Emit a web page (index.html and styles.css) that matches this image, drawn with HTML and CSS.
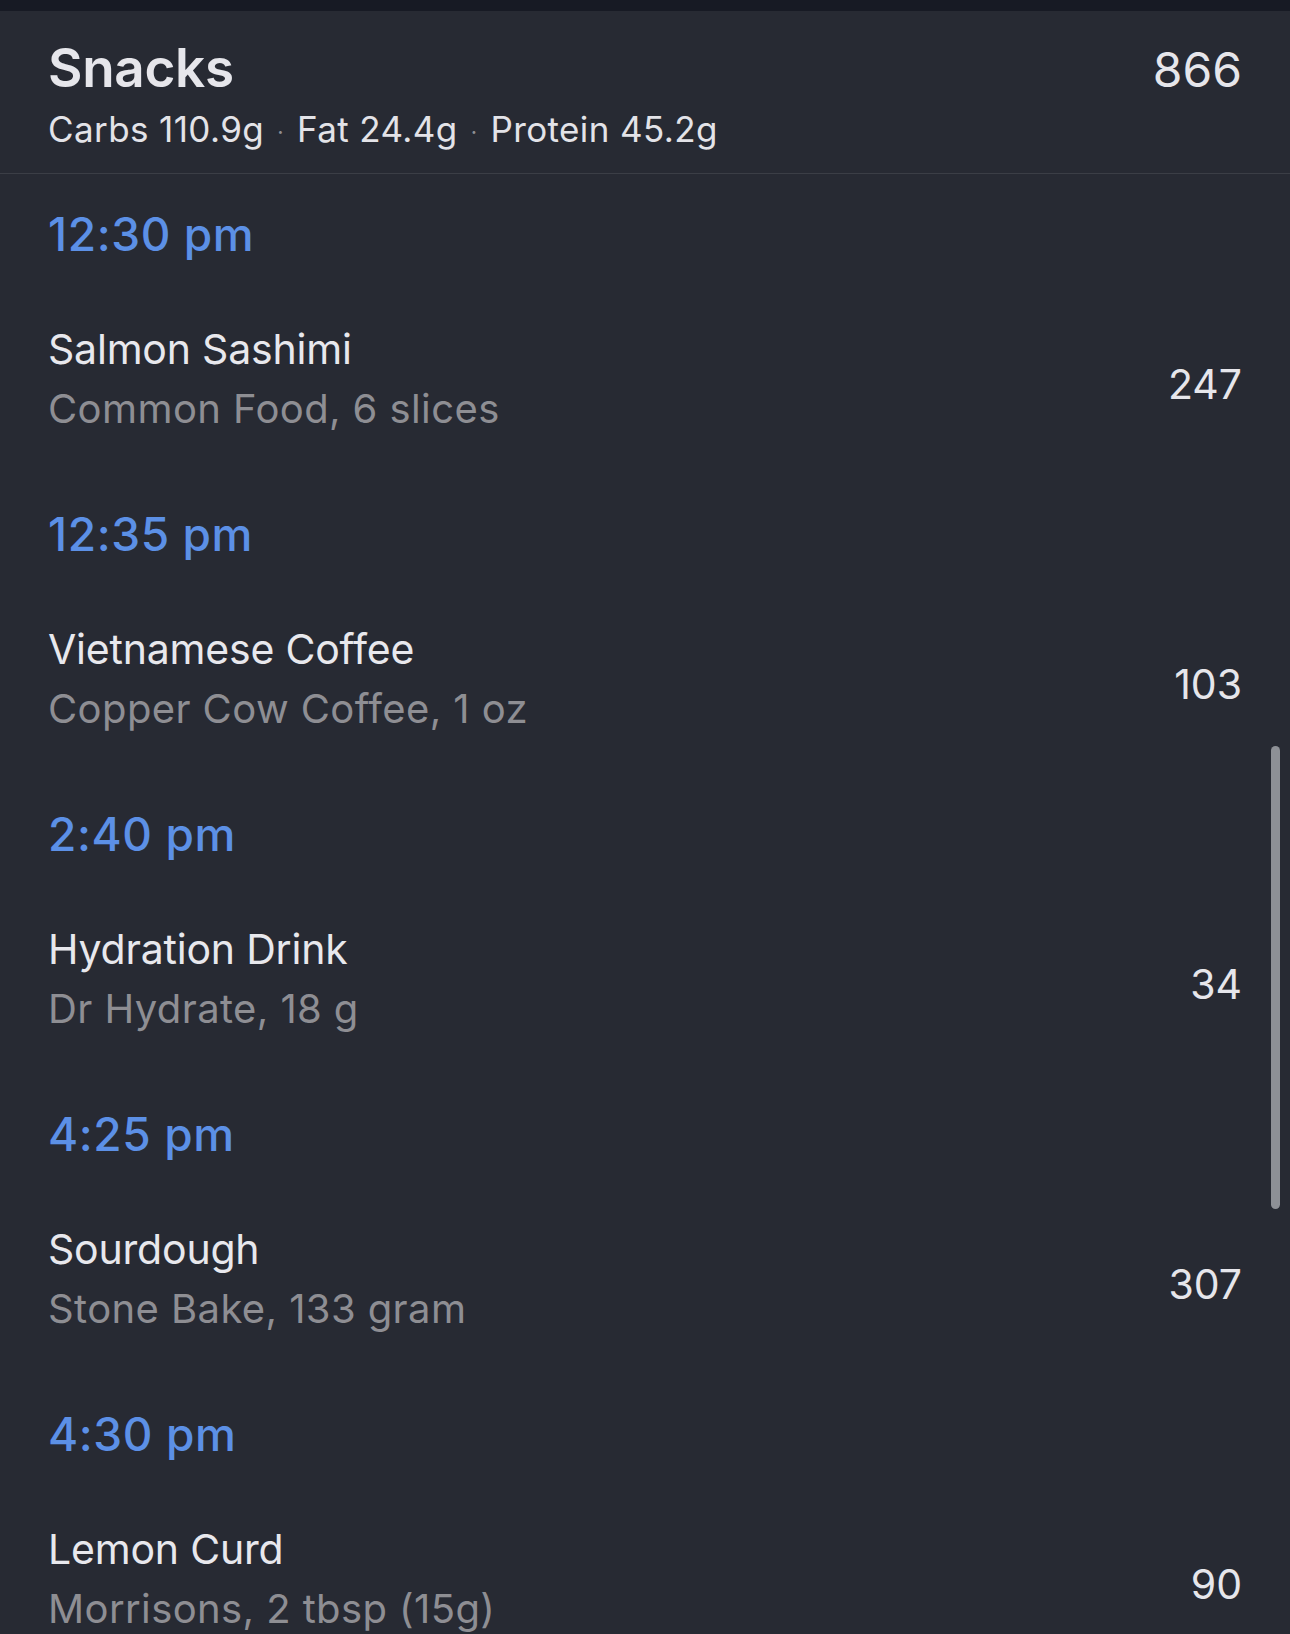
FILE: index.html
```html
<!DOCTYPE html>
<html lang="en">
<head>
<meta charset="utf-8">
<title>Snacks</title>
<link rel="stylesheet" href="styles.css">
</head>
<body>
<div class="topbar"></div>
<header class="meal-header">
  <div class="meal-info">
    <h1 class="meal-title">Snacks</h1>
    <p class="macros">Carbs 110.9g<span class="dot">·</span>Fat 24.4g<span class="dot">·</span>Protein 45.2g</p>
  </div>
  <div class="meal-total">866</div>
</header>
<main class="entries">
  <section class="entry">
    <div class="time">12:30 pm</div>
    <div class="item">
      <div class="item-text">
        <div class="item-name">Salmon Sashimi</div>
        <div class="item-detail">Common Food, 6 slices</div>
      </div>
      <div class="kcal">247</div>
    </div>
  </section>
  <section class="entry">
    <div class="time">12:35 pm</div>
    <div class="item">
      <div class="item-text">
        <div class="item-name">Vietnamese Coffee</div>
        <div class="item-detail">Copper Cow Coffee, 1 oz</div>
      </div>
      <div class="kcal">103</div>
    </div>
  </section>
  <section class="entry">
    <div class="time">2:40 pm</div>
    <div class="item">
      <div class="item-text">
        <div class="item-name">Hydration Drink</div>
        <div class="item-detail">Dr Hydrate, 18 g</div>
      </div>
      <div class="kcal">34</div>
    </div>
  </section>
  <section class="entry">
    <div class="time">4:25 pm</div>
    <div class="item">
      <div class="item-text">
        <div class="item-name">Sourdough</div>
        <div class="item-detail">Stone Bake, 133 gram</div>
      </div>
      <div class="kcal">307</div>
    </div>
  </section>
  <section class="entry">
    <div class="time">4:30 pm</div>
    <div class="item">
      <div class="item-text">
        <div class="item-name">Lemon Curd</div>
        <div class="item-detail">Morrisons, 2 tbsp (15g)</div>
      </div>
      <div class="kcal">90</div>
    </div>
  </section>
</main>
<div class="scrollbar"></div>
</body>
</html>
```

FILE: styles.css
```css
html, body {
  margin: 0;
  padding: 0;
}
body {
  background: #272a33;
  font-family: Inter, "Noto Sans", "Liberation Sans", sans-serif;
  color: #e8e8ed;
  width: 1290px;
  height: 1634px;
  overflow: hidden;
  position: relative;
}
.topbar {
  height: 11px;
  background: #171a24;
}
.meal-header {
  display: flex;
  justify-content: space-between;
  align-items: flex-start;
  padding: 24px 48px 19px 48px;
  border-bottom: 1px solid #3b3e46;
}
.meal-info {
  display: flex;
  flex-direction: column;
}
.meal-title {
  margin: 0;
  font-size: 53px;
  line-height: 66px;
  font-weight: 600;
  letter-spacing: -0.3px;
  color: #e6e6eb;
}
.macros {
  margin: 6px 0 0 0;
  font-size: 35px;
  line-height: 44px;
  font-weight: 400;
  letter-spacing: 0.4px;
  color: #e3e3e8;
}
.dot {
  color: #8e8e93;
  font-size: 22px;
  margin: 0 13px;
  vertical-align: 2px;
}
.meal-total {
  margin-top: 7px;
  font-size: 48px;
  line-height: 56px;
  font-weight: 400;
  color: #e6e6eb;
}
.entries {
  padding-top: 32px;
  display: flex;
  flex-direction: column;
}
.entry {
  display: flex;
  flex-direction: column;
  padding: 0 48px 72px 48px;
}
.time {
  font-size: 46px;
  line-height: 56px;
  font-weight: 500;
  letter-spacing: 0.6px;
  color: #5c90e6;
}
.item {
  margin-top: 62px;
  display: flex;
  justify-content: space-between;
  align-items: center;
}
.item-text {
  display: flex;
  flex-direction: column;
  gap: 10px;
}
.item-name {
  font-size: 41px;
  line-height: 50px;
  letter-spacing: -0.2px;
  color: #e8e8ed;
}
.item-detail {
  font-size: 40px;
  line-height: 50px;
  letter-spacing: 0.4px;
  color: #8e8e93;
}
.kcal {
  font-size: 41px;
  line-height: 50px;
  padding-top: 10px;
  color: #e6e6eb;
}
.scrollbar {
  position: absolute;
  left: 1271px;
  top: 746px;
  width: 9px;
  height: 463px;
  border-radius: 5px;
  background: #8d9096;
}
```
